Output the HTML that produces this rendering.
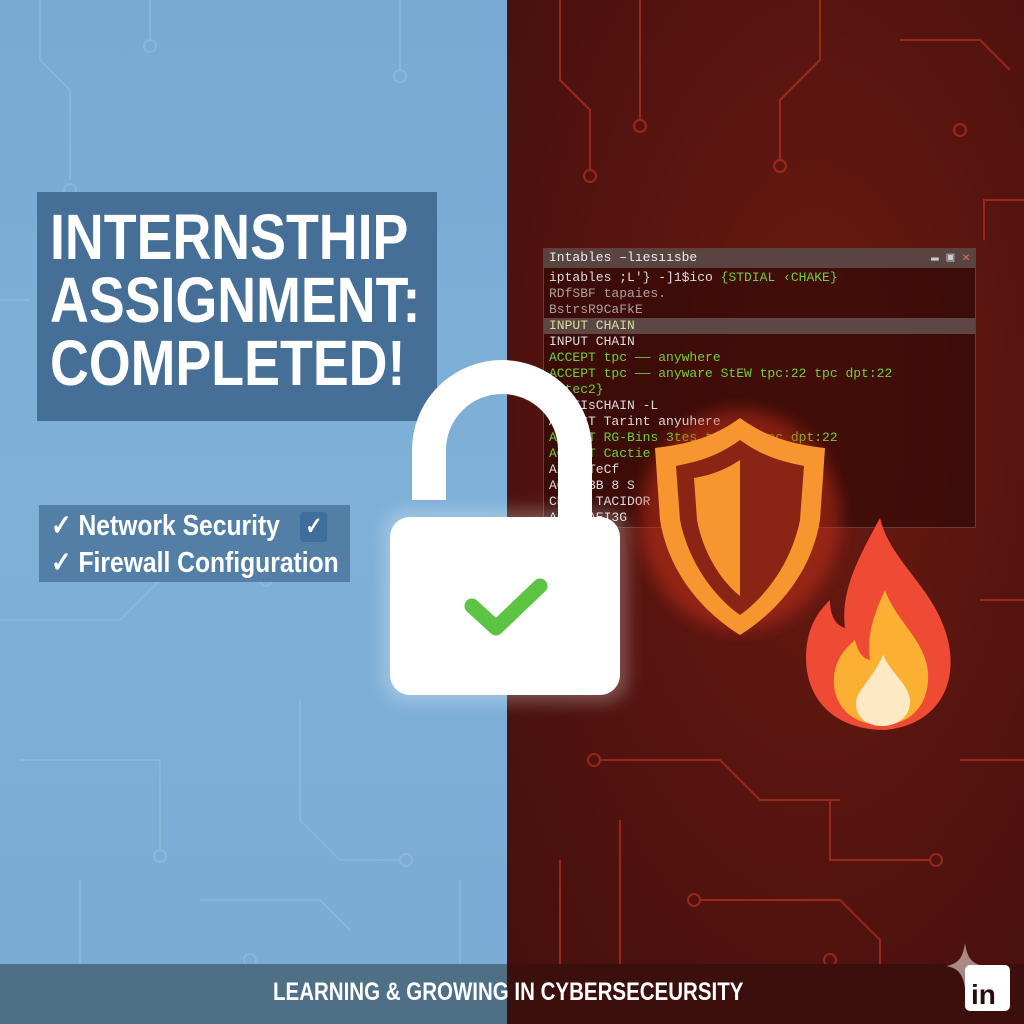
<!DOCTYPE html>
<html><head><meta charset="utf-8"><style>
*{margin:0;padding:0;box-sizing:border-box}
body{width:1024px;height:1024px;overflow:hidden;position:relative;font-family:"Liberation Sans",sans-serif;background:#7aabd2}
.abs{position:absolute}
.sx{display:inline-block;white-space:nowrap;transform-origin:left center}
#left{left:0;top:0;width:507px;height:1024px;background:linear-gradient(180deg,#78aad3,#7eb0d8 50%,#7aabd4)}
#right{left:507px;top:0;width:517px;height:1024px;background:radial-gradient(ellipse at 60% 40%,#6a1a12,#4e120e 70%,#461009)}
#title{left:37px;top:192px;width:400px;height:229px;background:rgba(60,100,140,.85);color:#fff;font-weight:bold;font-size:64px;line-height:63px;padding:14px 0 0 13px;white-space:nowrap}
#title .sx{transform:scaleX(.84)}
#checks{left:39px;top:505px;width:311px;height:77px;background:rgba(70,110,150,.75);color:#fff;font-size:29px;font-weight:bold;line-height:37px;padding:3px 0 0 12px;white-space:nowrap}
#checks .sx{transform:scaleX(.85)}
.cb{display:inline-block;width:32px;height:30px;background:#3f6d9c;border-radius:4px;vertical-align:middle;margin-left:16px;text-align:center;line-height:30px;font-size:24px}
#term{left:543px;top:248px;width:433px;height:280px;background:rgba(50,8,6,.7);border:1px solid #6a3a36;font-family:"Liberation Mono","DejaVu Sans Mono",monospace;font-size:13px;line-height:16px}
#tbar{height:19px;background:#5a4442;color:#eee;padding:1px 5px;font-size:13px}
.g{color:#6fcf3c}.w{color:#ddd}
#bar{left:0;top:964px;width:1024px;height:60px;background:linear-gradient(90deg,#4f6f87 0,#4f6f87 507px,#3a0f0c 507px)}
#bar span{position:absolute;left:273px;top:14px;color:#fff;font-size:25px;font-weight:bold;transform:scaleX(.82)}
</style></head><body>
<div id="left" class="abs"></div>
<div id="right" class="abs"></div>
<svg class="abs" style="left:0;top:0" width="1024" height="1024">
<g stroke="#9cc3e2" stroke-width="2" fill="none" opacity=".45">
<path d="M40 0v60l30 30v90"/><circle cx="70" cy="190" r="6"/><path d="M150 0v40"/><circle cx="150" cy="46" r="6"/>
<path d="M400 0v70"/><circle cx="400" cy="76" r="6"/><path d="M0 620h120l40-40h100"/><circle cx="266" cy="580" r="6"/>
<path d="M20 760h140v90"/><circle cx="160" cy="856" r="6"/><path d="M300 700v120l40 40h60"/><circle cx="406" cy="860" r="6"/>
<path d="M80 880v84M200 900h120l30 30"/><circle cx="250" cy="960" r="6"/><path d="M460 880v84"/><path d="M0 300h30"/>
</g>
<g stroke="#b8301e" stroke-width="2" fill="none" opacity=".7">
<path d="M560 0v80l30 30v60"/><circle cx="590" cy="176" r="6"/><path d="M640 0v120"/><circle cx="640" cy="126" r="6"/>
<path d="M820 0v60l-40 40v60"/><circle cx="780" cy="166" r="6"/><path d="M900 40h80l30 30"/><circle cx="960" cy="130" r="6"/>
<path d="M1024 200h-40v40"/><path d="M600 760h120l40 40h80"/><circle cx="594" cy="760" r="6"/><path d="M560 860v104M620 820v144"/>
<path d="M700 900h140l40 40v24"/><circle cx="694" cy="900" r="6"/><path d="M830 800v60h100"/><circle cx="936" cy="860" r="6"/>
<path d="M960 760h64M980 600h44"/><circle cx="830" cy="960" r="6"/>
</g></svg>
<div id="title" class="abs"><span class="sx">INTERNSTHIP</span><br><span class="sx">ASSIGNMENT:</span><br><span class="sx">COMPLETED!</span></div>
<div id="checks" class="abs"><span class="sx">✓ Network Security <span class="cb">✓</span></span><br><span class="sx">✓ Firewall Configuration</span></div>
<div id="term" class="abs">
<div id="tbar">Intables –lıesıısbe<span style="float:right;color:#ccc">▬ ▣ <span style="color:#e66">✕</span></span></div>
<div style="padding:2px 5px" >
<div><span class="w">iptables ;L'} -]1$ico</span> <span class="g">{STDIAL ‹CHAKE}</span></div>
<div class="w" style="opacity:.7">RDfSBF  tapaies.</div>
<div class="w" style="opacity:.7">BstrsR9CaFkE</div>
<div style="background:#5e4644;margin:0 -5px;padding:0 5px;color:#cfe0a0">INPUT CHAIN</div>
<div class="w">INPUT CHAIN</div>
<div class="g">ACCEPT tpc —— anywhere</div>
<div class="g">ACCEPT tpc —— anyware StEW tpc:22 tpc dpt:22</div>
<div class="g">{etec2}</div>
<div class="w">AcTEIsCHAIN -L</div>
<div class="w">ACCEST Tarint anyuhere</div>
<div class="g">ACCEPT RG-Bins 3tes tpc:22 tpc dpt:22</div>
<div class="g">ACCEPT Cactie</div>
<div class="w">A2   AcTeCf</div>
<div class="w">ACC  PBB 8 S</div>
<div class="w">CHAIN TACIDOR</div>
<div class="w">AIRT  AEI3G</div>
</div></div>
<svg class="abs" style="left:0;top:0" width="1024" height="1024">
<defs><filter id="gl"><feGaussianBlur stdDeviation="8"/></filter></defs>
<ellipse cx="740" cy="520" rx="100" ry="110" fill="#d8341a" opacity=".45" filter="url(#gl)"/>
<path d="M740 418 C710 440 680 445 655 448 L660 520 C668 570 700 610 740 635 C780 610 812 570 820 520 L825 448 C800 445 770 440 740 418Z" fill="#f7952e"/>
<path d="M740 440 C715 458 695 462 676 466 L680 520 C688 560 712 595 740 615 C768 595 792 560 800 520 L804 466 C785 462 765 458 740 440Z" fill="#8a2414"/>
<path d="M740 460 C722 472 706 476 694 478 L697 520 C703 552 720 580 740 596Z" fill="#f7952e"/>
<path d="M880 518 C890 560 930 585 945 630 C962 680 940 725 885 730 C835 730 805 700 806 655 C807 625 820 610 830 600 C830 615 835 625 845 628 C840 590 860 555 880 518Z" fill="#ef4a34"/>
<path d="M885 590 C895 620 925 640 928 672 C930 705 910 725 882 725 C852 725 832 705 834 677 C836 655 850 645 855 640 C858 652 862 658 870 660 C866 635 875 612 885 590Z" fill="#fbb033"/>
<path d="M883 655 C892 675 910 685 910 702 C910 716 898 726 882 726 C866 726 855 716 856 702 C857 690 872 680 883 655Z" fill="#fde9c4"/>
<rect x="382" y="509" width="246" height="194" rx="24" fill="#fff" opacity=".25" filter="url(#gl)"/>
<path d="M429 500 V450 A73 73 0 0 1 575 450 V530" fill="none" stroke="#fff" stroke-width="34"/>
<rect x="390" y="517" width="230" height="178" rx="20" fill="#fff"/>
<path d="M472 606 L496 628 L540 586" fill="none" stroke="#5cc343" stroke-width="15" stroke-linecap="round" stroke-linejoin="round"/>
</svg>
<div id="bar" class="abs"><span class="sx">LEARNING &amp; GROWING IN CYBERSECEURSITY</span></div>
<svg class="abs" style="left:940px;top:940px" width="84" height="84">
<path d="M25 3 C27 18 32 24 44 26 C32 28 27 34 25 48 C23 34 18 28 6 26 C18 24 23 18 25 3Z" fill="#c9b3b0" opacity=".75"/>
<rect x="25" y="25" width="45" height="46" rx="5" fill="#fff"/>
<text x="31" y="64" font-family="Liberation Sans" font-weight="bold" font-size="28" fill="#2a0d0b">in</text>
</svg>
</body></html>
